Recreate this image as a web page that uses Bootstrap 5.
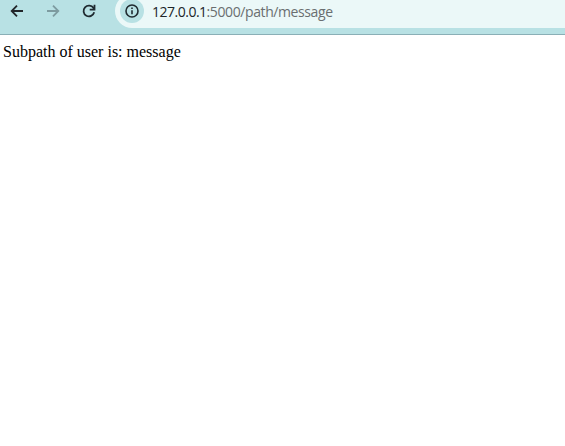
<!DOCTYPE html>
<html lang="en">
<head>
<meta charset="utf-8">
<meta name="viewport" content="width=device-width, initial-scale=1">
<title>127.0.0.1:5000/path/message</title>
<link href="https://cdn.jsdelivr.net/npm/bootstrap@5.3.0/dist/css/bootstrap.min.css" rel="stylesheet">
<style>
  body { background: #fff; overflow: hidden; }
  .toolbar { height: 41px; margin-top: -6px; background: #b8e1e4; border-bottom: 1px solid #8aafb6; }
  .tool-btn { width: 36px; height: 34px; color: #1f2a30; }
  .tool-btn.back { width: 35px; padding-right: 1px !important; }
  .tool-btn.forward { color: #7d9ba0; }
  .omnibox { height: 34px; margin-left: 8px; padding-left: 5px; background: #ebf8f8; border-radius: 17px 0 0 17px; }
  .site-info { width: 24px; height: 24px; background: #b8e1e4; color: #1f2a30; }
  .address { margin-left: 8px; padding-top: 1px; font: 14px/20px "Open Sans", sans-serif; letter-spacing: -.4px; color: #6a6e70; white-space: nowrap; }
  .host { color: #202529; letter-spacing: -.5px; }
  .page-text { padding: 7px 3px; font: 16px/20px "Liberation Serif", serif; color: #000; }
</style>
</head>
<body>
<header class="toolbar d-flex align-items-start">
  <button class="tool-btn back btn p-0 border-0 d-flex align-items-center justify-content-center" aria-label="Back">
    <svg width="14" height="14" viewBox="0 0 14 14" fill="none" stroke="currentColor" stroke-width="1.8"><path d="M13 7H2M7 1.7 1.7 7 7 12.3"/></svg>
  </button>
  <button class="tool-btn forward btn p-0 border-0 d-flex align-items-center justify-content-center" aria-label="Forward">
    <svg width="14" height="14" viewBox="0 0 14 14" fill="none" stroke="currentColor" stroke-width="1.8"><path d="M1 7h11M7 1.7 12.3 7 7 12.3"/></svg>
  </button>
  <button class="tool-btn btn p-0 border-0 d-flex align-items-center justify-content-center" aria-label="Reload">
    <svg width="14" height="14" viewBox="0 0 14 14" fill="none" stroke="currentColor" stroke-width="1.8"><path d="M12.2 8.3A5.4 5.4 0 1 1 11.5 4L12.4 5.2M12.5.8v4.9H7.7"/></svg>
  </button>
  <div class="omnibox flex-grow-1 d-flex align-items-center">
    <span class="site-info rounded-circle d-flex align-items-center justify-content-center">
      <svg width="14" height="14" viewBox="0 0 14 14" fill="none" stroke="currentColor" stroke-width="1.6"><circle cx="7" cy="7" r="6"/><path d="M7 6.3v4M7 3.6v1.5"/></svg>
    </span>
    <div class="address"><span class="host">127.0.0.1</span>:5000/path/message</div>
  </div>
</header>
<main class="page-text">Subpath of user is: message</main>
<script src="https://cdn.jsdelivr.net/npm/bootstrap@5.3.0/dist/js/bootstrap.bundle.min.js"></script>
</body>
</html>
